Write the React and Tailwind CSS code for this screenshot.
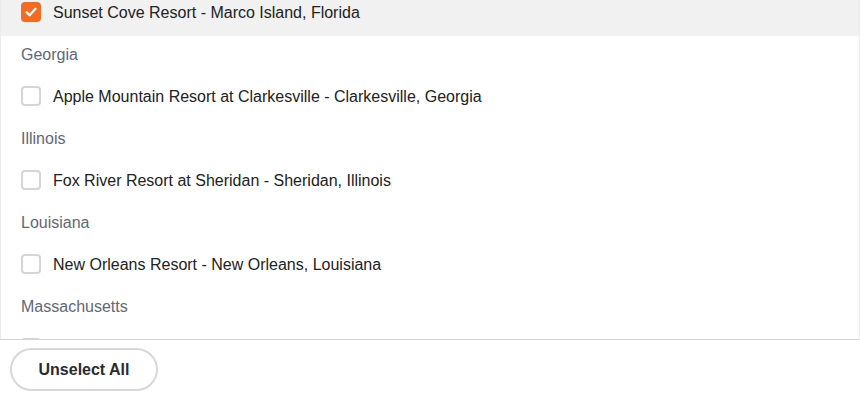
import React, { useState } from 'react';

const groups = [
    { state: null, items: [{ id: 1, name: 'Sunset Cove Resort - Marco Island, Florida' }] },
    { state: 'Georgia', items: [{ id: 2, name: 'Apple Mountain Resort at Clarkesville - Clarkesville, Georgia' }] },
    { state: 'Illinois', items: [{ id: 3, name: 'Fox River Resort at Sheridan - Sheridan, Illinois' }] },
    { state: 'Louisiana', items: [{ id: 4, name: 'New Orleans Resort - New Orleans, Louisiana' }] },
    // scrolled out of view, only the top of its checkbox peeks out
    { state: 'Massachusetts', items: [{ id: 5, name: '' }] },
];

const Checkbox = ({ checked }) => (
    checked ? (
        <span className="w-5 h-5 rounded-[4px] bg-[#f36c21] flex items-center justify-center shrink-0">
            <svg width="14" height="14" viewBox="0 0 14 14" fill="none">
                <path d="M2.5 7.2 L5.6 10.2 L11.5 3.8" stroke="white" strokeWidth="2.3" strokeLinecap="round" strokeLinejoin="round" />
            </svg>
        </span>
    ) : (
        <span className="w-5 h-5 rounded-[4px] border-2 border-[#d6d6d6] bg-white shrink-0" />
    )
);

const App = () => {
    const [selected, setSelected] = useState({ 1: true });

    return (
        <div className="w-[860px] h-[400px] bg-white flex flex-col overflow-hidden" style={{ fontFamily: '"Liberation Sans", Arial, sans-serif' }}>
            <div className="h-[339px] overflow-hidden border-r border-l border-[#ececec]">
                <div className="-mt-3">
                    {groups.map((g, i) => (
                        <div key={i}>
                            {g.state && (
                                <div className="h-9 flex items-center pl-5 pt-[2px] text-base text-[#5f6877]">{g.state}</div>
                            )}
                            {g.items.map(item => (
                                <div
                                    key={item.id}
                                    onClick={() => setSelected(s => ({ ...s, [item.id]: !s[item.id] }))}
                                    className={`h-12 flex items-center gap-3 pl-5 text-base text-[#222222] cursor-pointer ${selected[item.id] ? 'bg-[#f1f1f1] -mx-px pl-[21px]' : ''}`}
                                >
                                    <Checkbox checked={!!selected[item.id]} />
                                    {item.name && <span className="pt-[2px]">{item.name}</span>}
                                </div>
                            ))}
                        </div>
                    ))}
                </div>
            </div>
            <div className="border-t border-[#d4d4d4] flex-1 px-[10px] pt-[8px]">
                <button
                    onClick={() => setSelected({})}
                    className="w-[148px] h-[43px] rounded-full border-2 border-[#d8d8d8] bg-white text-base font-bold text-[#2b2b2b]"
                >
                    Unselect All
                </button>
            </div>
        </div>
    );
};

export default App;
